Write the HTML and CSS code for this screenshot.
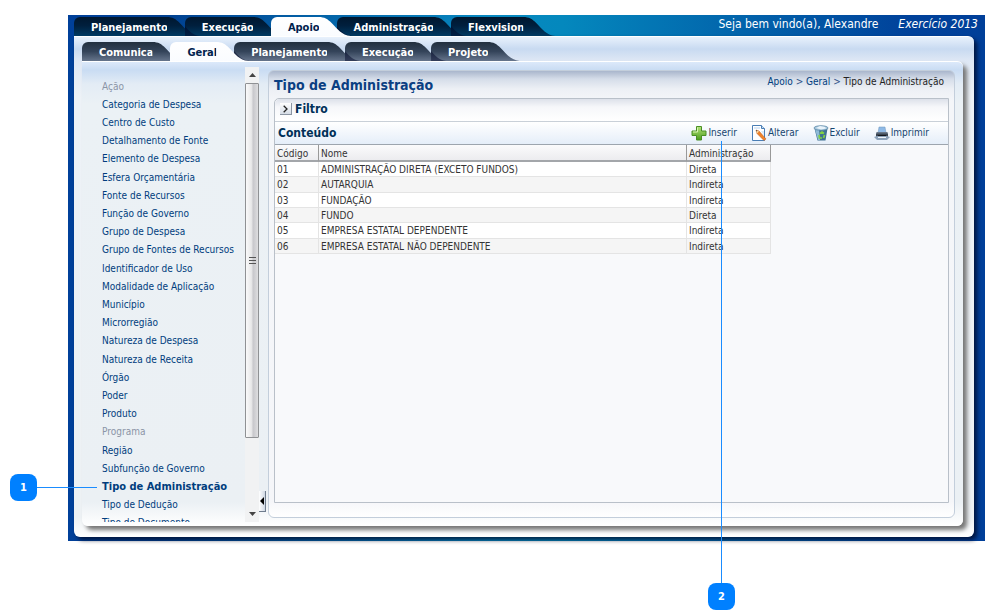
FILE: index.html
```html
<!DOCTYPE html>
<html lang="pt-BR">
<head>
    <meta charset="UTF-8">
    <meta name="viewport" content="width=device-width, initial-scale=1.0">
    <title>Tipo de Administração</title>
    <link rel="stylesheet" href="styles.css">
</head>
<body>
    <div class="app">
        <header class="topbar">
            <nav class="tabs tabs-main">
                <a href="#">Planejamento</a>
                <a href="#">Execução</a>
                <a href="#" class="active">Apoio</a>
                <a href="#">Administração</a>
                <a href="#">Flexvision</a>
            </nav>
            <div class="user">
                <span>Seja bem vindo(a), Alexandre</span>
                <em>Exercício 2013</em>
            </div>
        </header>

        <div class="frame">
            <nav class="tabs tabs-sub">
                <a href="#">Comunica</a>
                <a href="#" class="active">Geral</a>
                <a href="#">Planejamento</a>
                <a href="#">Execução</a>
                <a href="#">Projeto</a>
            </nav>

            <div class="workspace">
                <aside class="sidebar">
                    <ul class="menu">
                        <li><a class="disabled">Ação</a></li>
                        <li><a href="#">Categoria de Despesa</a></li>
                        <li><a href="#">Centro de Custo</a></li>
                        <li><a href="#">Detalhamento de Fonte</a></li>
                        <li><a href="#">Elemento de Despesa</a></li>
                        <li><a href="#">Esfera Orçamentária</a></li>
                        <li><a href="#">Fonte de Recursos</a></li>
                        <li><a href="#">Função de Governo</a></li>
                        <li><a href="#">Grupo de Despesa</a></li>
                        <li><a href="#">Grupo de Fontes de Recursos</a></li>
                        <li><a href="#">Identificador de Uso</a></li>
                        <li><a href="#">Modalidade de Aplicação</a></li>
                        <li><a href="#">Município</a></li>
                        <li><a href="#">Microrregião</a></li>
                        <li><a href="#">Natureza de Despesa</a></li>
                        <li><a href="#">Natureza de Receita</a></li>
                        <li><a href="#">Órgão</a></li>
                        <li><a href="#">Poder</a></li>
                        <li><a href="#">Produto</a></li>
                        <li><a class="disabled">Programa</a></li>
                        <li><a href="#">Região</a></li>
                        <li><a href="#">Subfunção de Governo</a></li>
                        <li><a href="#" class="current">Tipo de Administração</a></li>
                        <li><a href="#">Tipo de Dedução</a></li>
                        <li><a href="#">Tipo de Documento</a></li>
                    </ul>
                </aside>

                <div class="scrollbar">
                    <button class="scroll-btn" aria-label="Rolar para cima">
                        <svg width="7" height="4" viewBox="0 0 7 4"><path d="M3.5 0L7 4H0z" fill="#444"/></svg>
                    </button>
                    <div class="scroll-track">
                        <div class="scroll-thumb"><i></i><i></i><i></i></div>
                    </div>
                    <button class="scroll-btn" aria-label="Rolar para baixo">
                        <svg width="7" height="4" viewBox="0 0 7 4"><path d="M0 0H7L3.5 4z" fill="#444"/></svg>
                    </button>
                </div>

                <div class="splitter">
                    <button class="collapse" aria-label="Recolher menu">
                        <svg width="4" height="8" viewBox="0 0 4 8"><path d="M4 0V8L0 4z" fill="#000"/></svg>
                    </button>
                </div>

                <main class="content">
                    <div class="content-head">
                        <h1>Tipo de Administração</h1>
                        <nav class="breadcrumb"><a href="#">Apoio</a> &gt; <a href="#">Geral</a> &gt; <span>Tipo de Administração</span></nav>
                    </div>

                    <section class="box">
                        <div class="filter">
                            <button class="expand" aria-label="Expandir filtro">
                                <svg width="5" height="8" viewBox="0 0 5 8"><path d="M.7.7L4 4L.7 7.3" fill="none" stroke="#222" stroke-width="1.3"/></svg>
                            </button>
                            <h2>Filtro</h2>
                        </div>
                        <div class="toolbar">
                            <h2>Conteúdo</h2>
                            <div class="actions">
                                <button>
                                    <svg width="16" height="16" viewBox="0 0 16 16">
                                        <defs><linearGradient id="plus" x1="0" y1="0" x2="0" y2="1"><stop offset="0" stop-color="#b4e27a"/><stop offset="1" stop-color="#4c9d1c"/></linearGradient></defs>
                                        <path d="M5.500 1.500h5V6H15v4.500h-4.500V15h-5v-4.500H1V6h4.500z" fill="url(#plus)" stroke="#4a8f24"/>
                                        <path d="M6.500 2.500V7H2" fill="none" stroke="#d8f2b2"/>
                                    </svg>
                                    Inserir
                                </button>
                                <button>
                                    <svg width="16" height="16" viewBox="0 0 16 16">
                                        <path d="M1.500 .5h9l3 3v12h-12z" fill="#fff" stroke="#4a7eb5"/>
                                        <path d="M10.500 .5v3h3" fill="#c6dcf2" stroke="#4a7eb5"/>
                                        <path d="M3 2h6v2H3zM10 6h3v5z" fill="#dce9f7"/>
                                        <path d="M5 5l1 3.500 7 7 2-1.500-7-8z" fill="#f08228" stroke="#b5551a" stroke-width=".5"/>
                                        <path d="M5 5l1 3.500L8 6.500z" fill="#f6d9a8"/>
                                        <path d="M5 5l.4 1.500L6.300 5.700z" fill="#222"/>
                                    </svg>
                                    Alterar
                                </button>
                                <button>
                                    <svg width="16" height="16" viewBox="0 0 16 16">
                                        <path d="M1.500 3.500h13L12.500 15.500h-8z" fill="#3f7191"/>
                                        <path d="M2 4h4l1 11H5z" fill="#8fbbd8"/>
                                        <ellipse cx="8" cy="3" rx="7" ry="2.300" fill="#a9c9df" stroke="#527f9f" stroke-width=".7"/>
                                        <path d="M3 3l4-2 5 1 1 1.500-5 1z" fill="#e9f3fa"/>
                                        <path d="M7 8.500l2-1.500 2 1.500M11.500 10l-1 3M9 13H6.500L6 10" fill="none" stroke="#82d144" stroke-width="1.700"/>
                                    </svg>
                                    Excluir
                                </button>
                                <button>
                                    <svg width="16" height="16" viewBox="0 0 16 16">
                                        <path d="M5 2h6l1 6H4z" fill="#8eb9e6" stroke="#6d94bb" stroke-width=".5"/>
                                        <path d="M3 7h10l1 2v3H2V9z" fill="#3c4653"/>
                                        <path d="M3 7h10l1 1.500H2z" fill="#69788a"/>
                                        <path d="M4 10h8v1.500H4z" fill="#15191f"/>
                                        <path d="M0 12l3-1h10l3 1L13 15H3z" fill="#8da3bb"/>
                                        <path d="M4 12h8v1H4z" fill="#eef4fa"/>
                                    </svg>
                                    Imprimir
                                </button>
                            </div>
                        </div>
                        <div class="grid">
                            <table>
                                <thead>
                                    <tr><th class="col-code">Código</th><th class="col-name">Nome</th><th class="col-type">Administração</th></tr>
                                </thead>
                                <tbody>
                                    <tr><td>01</td><td>ADMINISTRAÇÃO DIRETA (EXCETO FUNDOS)</td><td>Direta</td></tr>
                                    <tr><td>02</td><td>AUTARQUIA</td><td>Indireta</td></tr>
                                    <tr><td>03</td><td>FUNDAÇÃO</td><td>Indireta</td></tr>
                                    <tr><td>04</td><td>FUNDO</td><td>Direta</td></tr>
                                    <tr><td>05</td><td>EMPRESA ESTATAL DEPENDENTE</td><td>Indireta</td></tr>
                                    <tr><td>06</td><td>EMPRESA ESTATAL NÃO DEPENDENTE</td><td>Indireta</td></tr>
                                </tbody>
                            </table>
                        </div>
                    </section>
                </main>
            </div>
        </div>
    </div>

    <!-- numbered callouts -->
    <div class="callout callout-menu"><span>1</span></div>
    <div class="callout callout-insert"><span>2</span></div>
</body>
</html>
```
FILE: styles.css
```css
* {
    box-sizing: border-box;
}

body {
    position: relative;
    display: flex;
    height: 100vh;
    margin: 0;
    padding: 15px 15px 74px 68px;
    background: #fff;
    color: #333;
    font-family: "DejaVu Sans Condensed", "DejaVu Sans", Tahoma, sans-serif;
    font-size: 10px;
    overflow: hidden;
}

a {
    color: #003d7d;
    text-decoration: none;
}

button {
    padding: 0;
    border: 0;
    background: none;
    color: inherit;
    font: inherit;
    cursor: pointer;
}

h1, h2 {
    margin: 0;
    font-weight: bold;
}

.app {
    flex: 1;
    display: flex;
    flex-direction: column;
    min-width: 0;
    padding: 0 11px 4px 6px;
    background: linear-gradient(90deg, #00409a, #003f90 10%, #0788c0 46%, #0488bd 54%, #00419a 92%, #003f99);
}

/* tabs */
.topbar {
    display: flex;
    justify-content: space-between;
    align-items: flex-end;
    height: 21px;
}

.tabs {
    display: flex;
}

.tabs a {
    position: relative;
    height: 19px;
    margin-right: 17px;
    padding-left: 17px;
    border-radius: 6px 0 0 0;
    background: linear-gradient(#00172f, #001f3d 45%, #003a63);
    color: #fff;
    font-size: 11px;
    font-weight: bold;
    line-height: 21px;
    white-space: nowrap;
}

/* slanted right end of a tab */
.tabs a::after {
    content: "";
    position: absolute;
    top: 0;
    left: calc(100% - 1px);
    width: 32px;
    height: 19px;
    background: inherit;
    clip-path: path("M0 0C6 0 9 2 13 6C19 12 23 18 32 19L0 19Z");
}

/* where the previous tab's end runs under this one */
.tabs a + a::before {
    content: "";
    position: absolute;
    top: 0;
    left: 0;
    width: 16px;
    height: 19px;
    background: rgba(0, 5, 40, 0.5);
    clip-path: path("M0 9C4 14 8 18 15 19L0 19Z");
}

.tabs-sub a {
    background: linear-gradient(#22303f, #34445a 50%, #66758c);
}

.tabs a.active {
    z-index: 1;
    background: linear-gradient(#fff, #fafcff);
    color: #00224d;
}

.tabs a.active::before {
    display: none;
}

.user {
    display: flex;
    gap: 20px;
    margin-right: -4px;
    color: #fff;
    font-size: 12px;
    line-height: 23px;
    white-space: nowrap;
}

.frame {
    flex: 1;
    display: flex;
    flex-direction: column;
    min-height: 0;
    padding: 5px 11px 11px 8px;
    border-top: 1px solid #fff;
    border-radius: 0 6px 6px 6px;
    background: linear-gradient(#e8f1fc, #c8daf1 12px, #dfe8f5 24px, #edf2f7 60px, #edf1f4 480px, #fff);
    box-shadow: 3px 3px 4px rgba(0, 10, 40, 0.8);
}

.workspace {
    flex: 1;
    display: flex;
    min-height: 0;
    padding: 5px 8px 8px 0;
    border-top: 1px solid #fff;
    border-radius: 0 6px 6px 6px;
    background: linear-gradient(#dce9fa, #c9dcf3 8px, #e3ecf5 22px, #ebf1f5 42px, #ebf0f4 440px, #fff);
    box-shadow: 4px 4px 4px #777;
}

/* sidebar */
.sidebar {
    flex: 0 0 163px;
    overflow: hidden;
    margin-bottom: -4px;
}

.menu {
    display: grid;
    grid-auto-rows: 1fr;
    align-items: center;
    height: 455px;
    margin: 10px 0 0;
    padding: 0 0 0 20px;
    list-style: none;
    white-space: nowrap;
}

.menu .disabled {
    color: #8a94a6;
}

.menu .current {
    font-size: 11px;
    font-weight: bold;
}

.scrollbar {
    flex: 0 0 14px;
    display: flex;
    flex-direction: column;
    margin-bottom: -4px;
    background: #f1f2f3;
}

.scroll-btn {
    display: flex;
    align-items: center;
    justify-content: center;
    height: 16px;
}

.scroll-track {
    flex: 1;
}

.scroll-thumb {
    display: flex;
    flex-direction: column;
    align-items: center;
    justify-content: center;
    gap: 2px;
    height: 84%;
    border: 1px solid #8f9194;
    border-radius: 1px;
    background: linear-gradient(90deg, #fafafa, #e8e8e9 45%, #c8c8cc 60%, #dedee0);
}

.scroll-thumb i {
    width: 7px;
    height: 1px;
    background: #555;
}

.splitter {
    flex: 0 0 9px;
    display: flex;
    align-items: flex-end;
    padding-bottom: 6px;
}

.collapse {
    display: flex;
    align-items: center;
    justify-content: flex-end;
    width: 7px;
    height: 21px;
    padding-right: 1px;
    border-right: 1px solid #6f7c8d;
    border-bottom: 1px solid #6f7c8d;
    background: linear-gradient(90deg, #fff, #cfd8e4);
}

/* content */
.content {
    flex: 1;
    display: flex;
    flex-direction: column;
    min-width: 0;
    margin-top: 3px;
    padding: 0 5px 14px;
    border: 1px solid #c3cedb;
    border-radius: 6px;
    background: linear-gradient(#a9b6cc, #d5dde9 8px, #edf0f5 18px, #f4f6f9 30px, #f5f6f9 430px, #fff);
}

.content-head {
    display: flex;
    justify-content: space-between;
    height: 27px;
    padding-right: 5px;
    white-space: nowrap;
}

h1 {
    color: #0b3f82;
    font-size: 14px;
    line-height: 28px;
}

.breadcrumb {
    color: #33558a;
    line-height: 22px;
}

.breadcrumb span {
    color: #222;
}

.box {
    flex: 1;
    display: flex;
    flex-direction: column;
    min-height: 0;
    border: 1px solid #b9c0c9;
    border-radius: 5px 0 0 0;
    background: #f8f9fb;
}

h2 {
    color: #003058;
    font-size: 12px;
}

.filter {
    display: flex;
    align-items: center;
    gap: 3px;
    height: 23px;
    padding: 0 0 2px 5px;
    border-bottom: 1px solid #c9d0d8;
    border-radius: 5px 0 0 0;
    background: linear-gradient(#dde1ea, #f6f7fa 8px, #fff);
}

.expand {
    display: flex;
    align-items: center;
    justify-content: center;
    width: 12px;
    height: 12px;
    border-right: 1px solid #8b95a3;
    border-bottom: 1px solid #8b95a3;
    background: linear-gradient(#fff, #d5dce6);
}

.toolbar {
    display: flex;
    align-items: center;
    justify-content: space-between;
    height: 23px;
    padding: 0 19px 1px 3px;
    border-bottom: 1px solid #9da5ae;
    background: linear-gradient(#fff, #e5eef9);
}

.actions {
    display: flex;
    gap: 14px;
    color: #17456f;
}

.actions button {
    display: flex;
    align-items: center;
    gap: 1px;
}

.grid {
    flex: 1;
    overflow: hidden;
}

table {
    width: 496px;
    height: 109px;
    border-collapse: separate;
    border-spacing: 0;
    table-layout: fixed;
    line-height: 12px;
    white-space: nowrap;
}

th {
    height: 17px;
    padding: 2px 2px 0;
    border-right: 1px solid #999;
    border-bottom: 2px solid #a3a6aa;
    background: linear-gradient(#fbfbfc, #ececef);
    font-weight: normal;
    text-align: left;
}

td {
    padding: 2px 2px 0;
    border-right: 1px solid #e4e4e4;
    border-bottom: 1px solid #e4e4e4;
    background: #fff;
}

tbody tr:nth-child(even) td {
    background: #f5f5f5;
}

.col-code {
    width: 44px;
}

.col-type {
    width: 84px;
}

/* callouts, drawn over the page */
.callout {
    position: absolute;
    display: flex;
    align-items: center;
}

.callout span {
    width: 27px;
    height: 27px;
    border-radius: 8px;
    background: #0080ff;
    color: #fff;
    font-size: 11px;
    font-weight: bold;
    line-height: 27px;
    text-align: center;
}

.callout::after {
    content: "";
    flex: 1;
    background: #1a8cff;
}

.callout-menu {
    top: 474px;
    left: 10px;
    width: 87px;
}

.callout-menu::after {
    height: 1px;
}

.callout-insert {
    top: 141px;
    left: 708px;
    flex-direction: column-reverse;
    height: 469px;
}

.callout-insert::after {
    width: 1px;
}
```
